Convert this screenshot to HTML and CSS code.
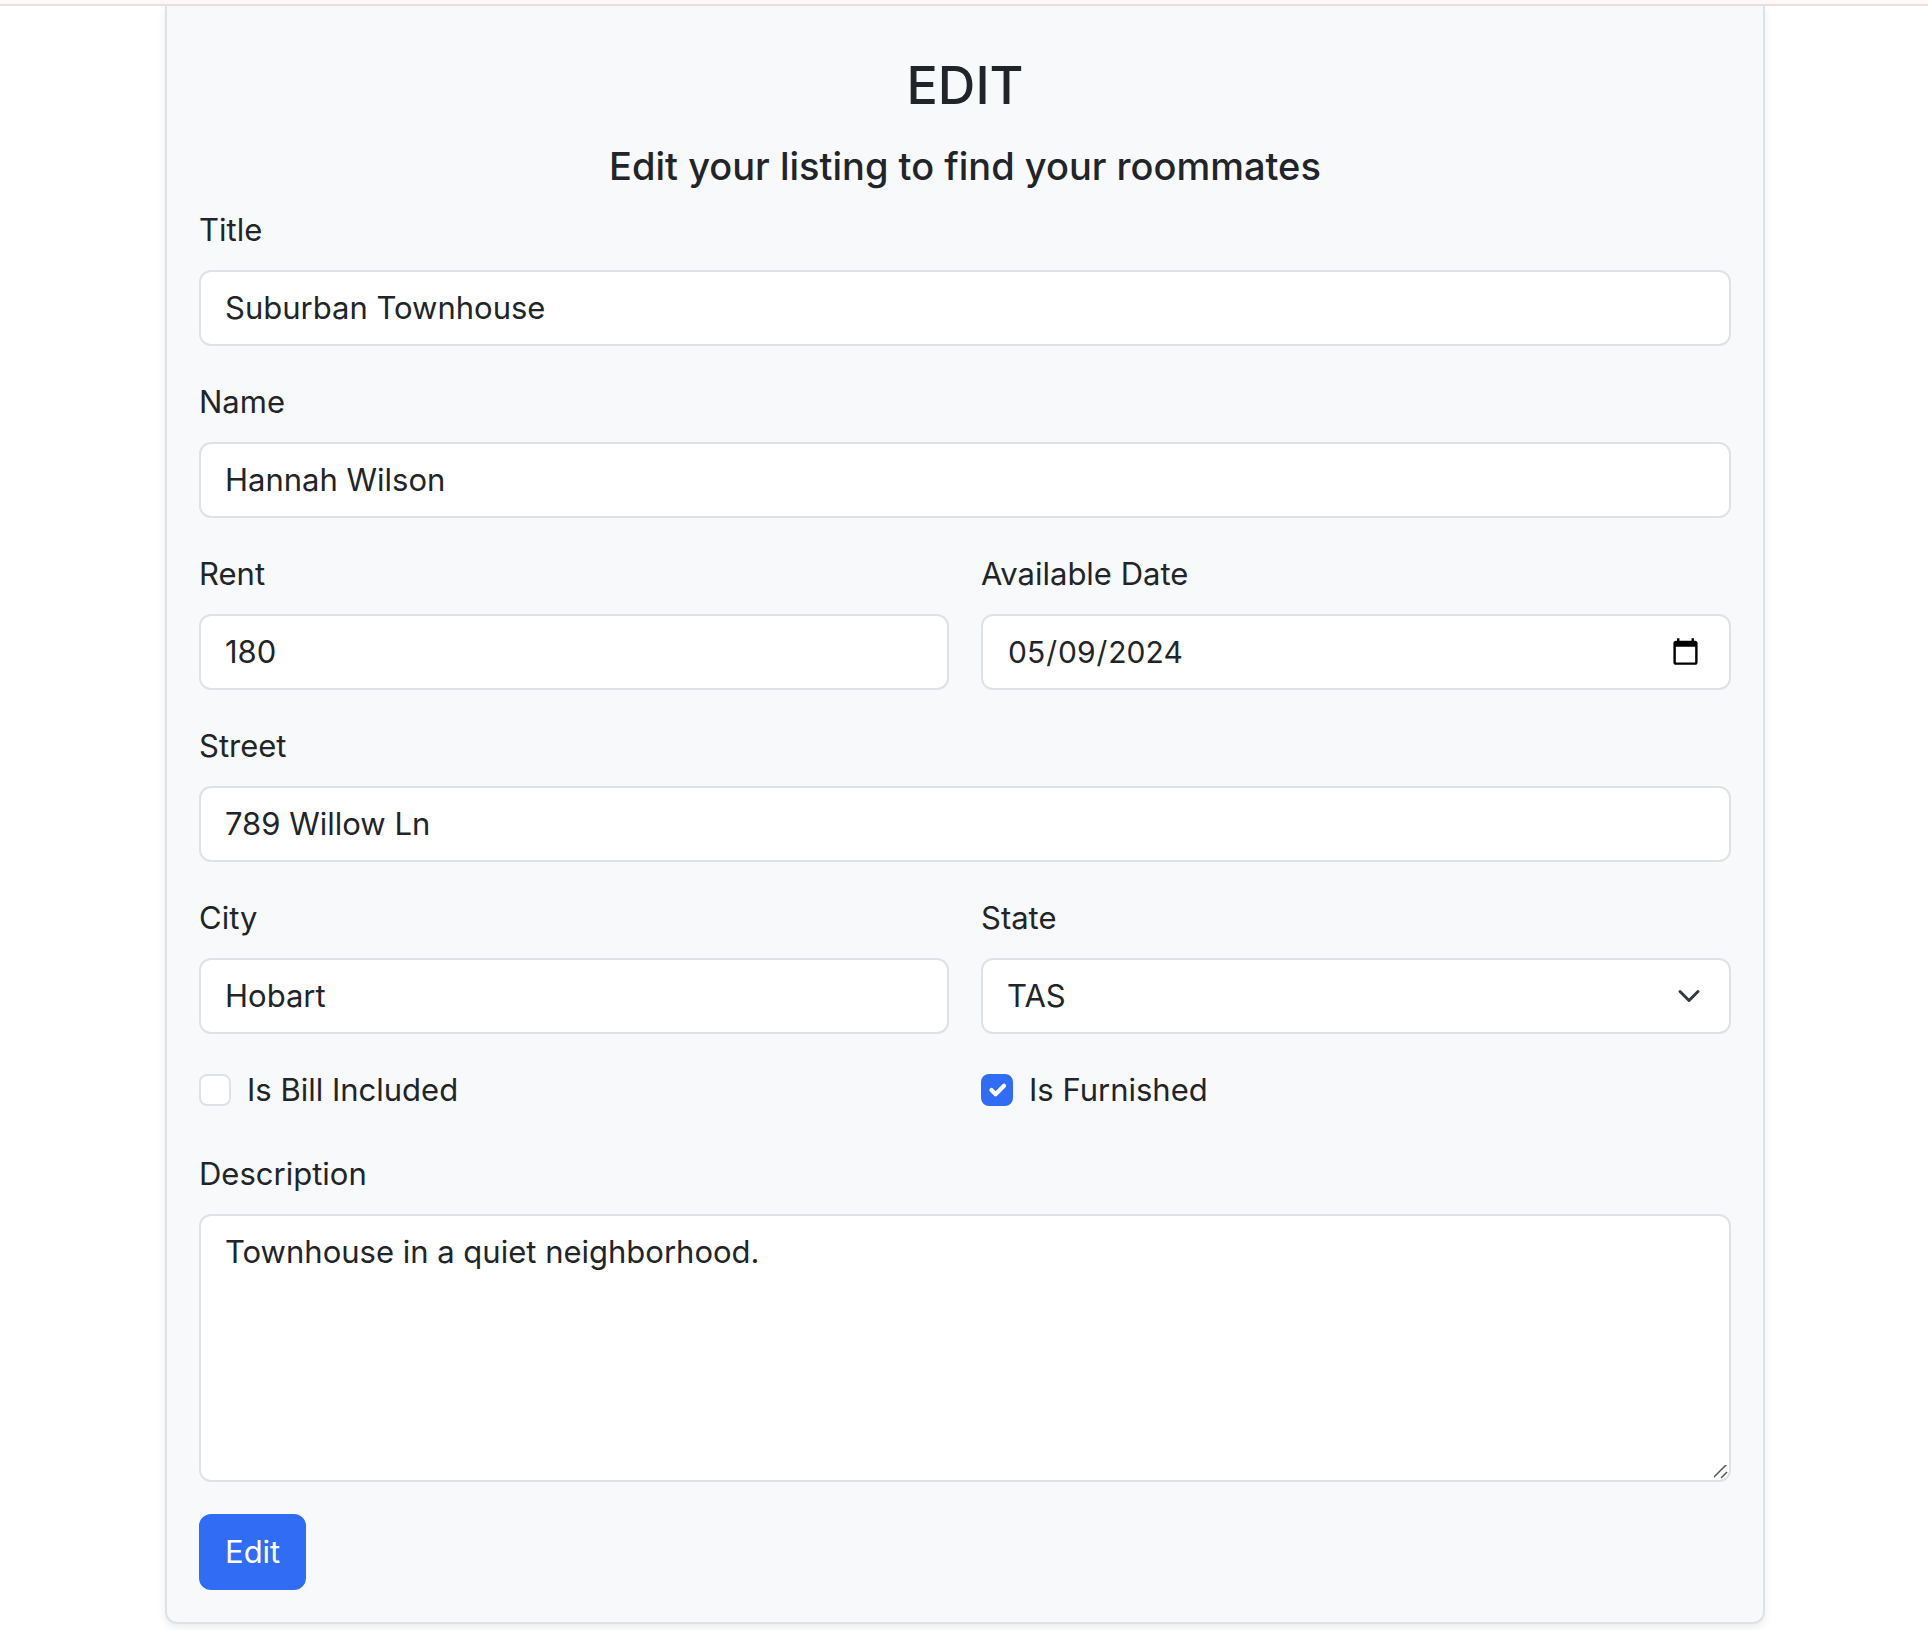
FILE: index.html
```html
<!DOCTYPE html>
<html lang="en">
<head>
  <meta charset="utf-8">
  <meta name="viewport" content="width=device-width, initial-scale=1">
  <title>Edit listing</title>
  <link rel="stylesheet" href="styles.css">
</head>
<body>
  <header class="topbar"></header>
  <main class="page">
    <form class="card">
      <h1 class="card-title">EDIT</h1>
      <h2 class="card-subtitle">Edit your listing to find your roommates</h2>

      <div class="fields">
        <div class="field field-wide">
          <label class="label" for="title">Title</label>
          <input class="control" id="title" type="text" value="Suburban Townhouse">
        </div>
        <div class="field field-wide">
          <label class="label" for="name">Name</label>
          <input class="control" id="name" type="text" value="Hannah Wilson">
        </div>
        <div class="field">
          <label class="label" for="rent">Rent</label>
          <input class="control" id="rent" type="text" inputmode="numeric" value="180">
        </div>
        <div class="field">
          <label class="label" for="date">Available Date</label>
          <input class="control control-date" id="date" type="date" value="2024-05-09">
        </div>
        <div class="field field-wide">
          <label class="label" for="street">Street</label>
          <input class="control" id="street" type="text" value="789 Willow Ln">
        </div>
        <div class="field">
          <label class="label" for="city">City</label>
          <input class="control" id="city" type="text" value="Hobart">
        </div>
        <div class="field">
          <label class="label" for="state">State</label>
          <select class="control control-select" id="state">
            <option selected>TAS</option>
          </select>
        </div>
        <div class="check">
          <input class="check-input" id="bill" type="checkbox">
          <label for="bill">Is Bill Included</label>
        </div>
        <div class="check">
          <input class="check-input" id="furnished" type="checkbox" checked>
          <label for="furnished">Is Furnished</label>
        </div>
        <div class="field field-wide">
          <label class="label" for="description">Description</label>
          <textarea class="control control-area" id="description" rows="5">Townhouse in a quiet neighborhood.</textarea>
        </div>
      </div>

      <button class="button" type="submit">Edit</button>
    </form>
  </main>
</body>
</html>
```
FILE: styles.css
```css
*,
*::before,
*::after {
  box-sizing: border-box;
}

body {
  margin: 0;
  background: #fff;
  color: #212529;
  font-family: Inter, "Liberation Sans", sans-serif;
  font-size: 31px;
  line-height: 48px;
}

.topbar {
  position: relative;
  height: 6px;
  background: #fff8f5;
  border-bottom: 2px solid #e6e0df;
}

.page {
  padding: 0 163px 6px 165px;
  overflow: hidden;
}

.card {
  padding: 40px 32px 32px;
  background: #f8f9fb;
  border: 2px solid #dee2e6;
  border-top: 0;
  border-radius: 0 0 12px 12px;
  box-shadow: 0 4px 8px rgba(0, 0, 0, 0.075);
}

.card-title,
.card-subtitle {
  margin: 0 0 16px;
  font-weight: 500;
  text-align: center;
}

.card-title {
  font-size: 52px;
  line-height: 80px;
}

.card-subtitle {
  font-size: 38px;
  line-height: 48px;
}

.fields {
  display: grid;
  grid-template-columns: 1fr 1fr;
  gap: 32px;
}

.field {
  display: flex;
  flex-direction: column;
  gap: 16px;
  min-width: 0;
}

.field-wide {
  grid-column: 1 / -1;
}

.control {
  display: block;
  width: 100%;
  min-height: 76px;
  margin: 0;
  padding: 12px 24px;
  color: inherit;
  font: inherit;
  background-color: #fff;
  border: 2px solid #dee2e6;
  border-radius: 12px;
  appearance: none;
}

.control-date {
  height: 76px;
  padding-right: 26px;
}

.control-date::-webkit-datetime-edit {
  padding: 0;
  font-size: 30px;
}

.control-date::-webkit-datetime-edit-fields-wrapper {
  padding: 0;
}

.control-select {
  padding-right: 72px;
  background-image: url("data:image/svg+xml,%3Csvg xmlns='http://www.w3.org/2000/svg' viewBox='0 0 16 16'%3E%3Cpath fill='none' stroke='%23343a40' stroke-linecap='round' stroke-linejoin='round' stroke-width='2' d='m2 5 6 6 6-6'/%3E%3C/svg%3E");
  background-repeat: no-repeat;
  background-position: right 28px center;
  background-size: 24px 24px;
}

.control-area {
  resize: vertical;
}

.control-area::-webkit-resizer {
  background: url("data:image/svg+xml,%3Csvg xmlns='http://www.w3.org/2000/svg' viewBox='0 0 16 16'%3E%3Cpath fill='none' stroke='%23555' stroke-width='1.5' d='M0 14 14 0M8 14l6-6'/%3E%3C/svg%3E") no-repeat right bottom / 16px 16px;
}

.check {
  display: flex;
  align-items: center;
  gap: 16px;
  padding-bottom: 4px;
}

.check-input {
  width: 32px;
  height: 32px;
  margin: 0;
  background: #fff center / contain no-repeat;
  border: 2px solid #dee2e6;
  border-radius: 8px;
  appearance: none;
}

.check-input:checked {
  background-color: #316df4;
  background-image: url("data:image/svg+xml,%3Csvg xmlns='http://www.w3.org/2000/svg' viewBox='0 0 20 20'%3E%3Cpath fill='none' stroke='%23fff' stroke-linecap='round' stroke-linejoin='round' stroke-width='3' d='m6 10 3 3 6-6'/%3E%3C/svg%3E");
  border-color: #316df4;
}

.button {
  margin-top: 32px;
  padding: 12px 24px;
  display: block;
  color: #fff;
  font: inherit;
  background: #316df4;
  border: 2px solid #316df4;
  border-radius: 12px;
  cursor: pointer;
}
```
